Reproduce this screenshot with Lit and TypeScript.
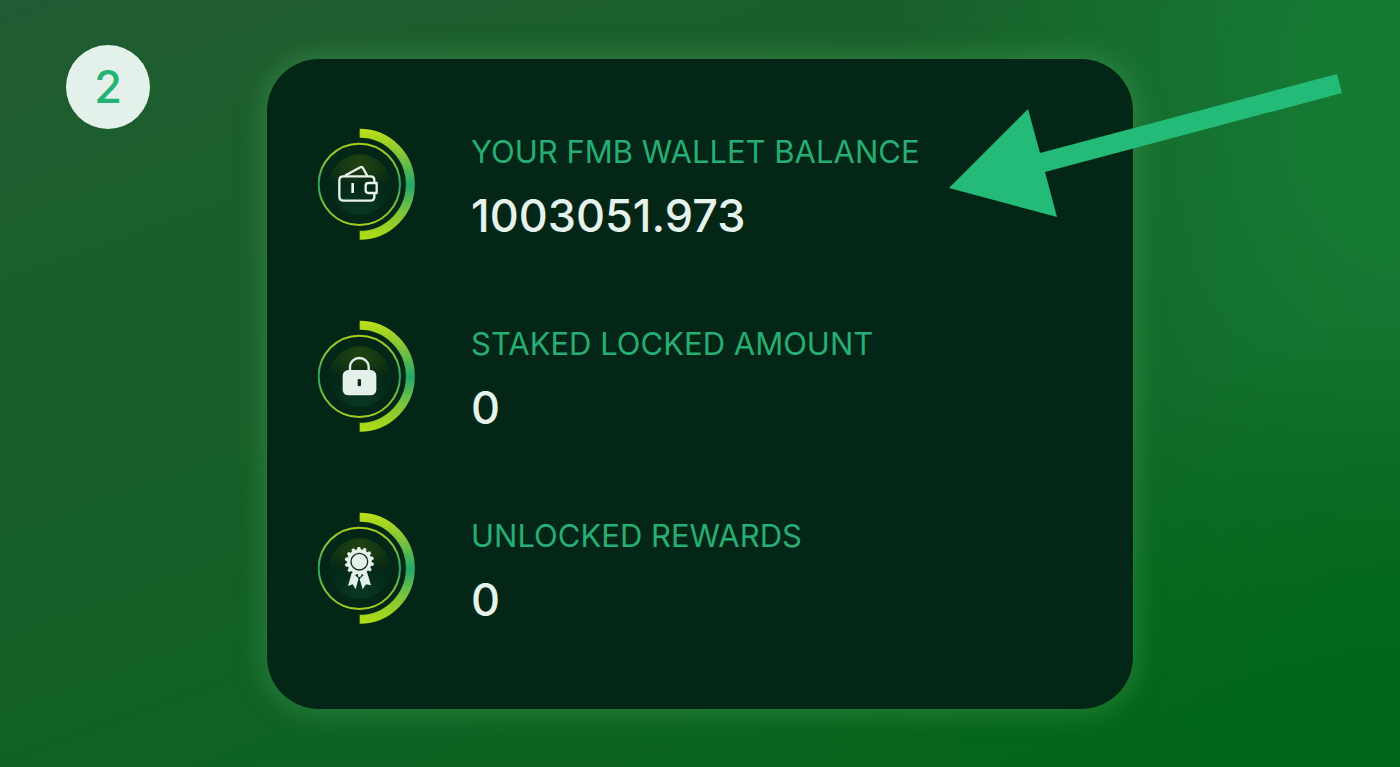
import { LitElement, html, css, svg } from "lit";
import { customElement, property } from "lit/decorators.js";

type Icon = "wallet" | "lock" | "award";

interface Stat {
  icon: Icon;
  label: string;
  value: string;
}

const STATS: Stat[] = [
  { icon: "wallet", label: "YOUR FMB WALLET BALANCE", value: "1003051.973" },
  { icon: "lock", label: "STAKED LOCKED AMOUNT", value: "0" },
  { icon: "award", label: "UNLOCKED REWARDS", value: "0" },
];

// Scalloped rosette: alternating outer and inner points round a circle.
const rosette = (cx: number, cy: number, outer: number, inner: number, teeth: number) => {
  const points: string[] = [];
  for (let i = 0; i < teeth; i++) {
    for (const [offset, r] of [[-0.25, outer], [0.12, outer], [0.3, inner], [0.55, inner]]) {
      const a = ((i + offset) / teeth) * Math.PI * 2;
      points.push(`${(cx + r * Math.sin(a)).toFixed(1)},${(cy - r * Math.cos(a)).toFixed(1)}`);
    }
  }
  return points.join(" ");
};

const GLYPHS = {
  wallet: svg`
    <g fill="none" stroke="#e8f3ec" stroke-width="7" stroke-linejoin="round" stroke-linecap="round">
      <path d="M208 187V180Q208 169 197 169H115Q103 169 103 181V229Q103 242 116 242H194Q208 242 208 230V221" />
      <path d="M122 166L166 142Q171 139 174 144L186 166" />
      <path d="M215 189H190Q182 189 182 197V211Q182 219 190 219H215Z" />
      <path d="M143 189V219" stroke-width="8" stroke-linecap="butt" />
    </g>`,
  lock: svg`
    <path d="M135 180V164a28 26 0 0 1 56 0V180" fill="none" stroke="#e4f1ea" stroke-width="7" />
    <rect x="113" y="174" width="101" height="76" rx="17" fill="#e4f1ea" />
    <rect x="158" y="201" width="10" height="22" rx="4" fill="#062718" />`,
  award: svg`
    <path d="M140 207L129 246L143 241L152 256L162 218L173 256L183 241L198 244L187 207Z" fill="#e4f1ea" />
    <path d="M150 213L163 207L176 213L163 226Z" fill="#06301f" />
    <circle cx="163" cy="215" r="4" fill="#e4f1ea" />
    <polygon points=${rosette(163, 173, 44, 37, 14)} fill="#e4f1ea" />
    <circle cx="163" cy="173" r="25" fill="#e4f1ea" stroke="#0c2d1b" stroke-width="4" />`,
};

@customElement("stat-ring")
export class StatRing extends LitElement {
  @property() icon: Icon = "wallet";

  static styles = css`
    :host {
      display: block;
      flex: none;
    }
    .ring {
      display: block;
      width: 98px;
      height: 112px;
    }
  `;

  render() {
    return html`
      <svg class="ring" viewBox="36 24 294 336" aria-hidden="true">
        <defs>
          <linearGradient id="arc" gradientUnits="userSpaceOnUse" x1="0" y1="27" x2="0" y2="360">
            <stop offset="0" stop-color="#c0df14" />
            <stop offset="0.25" stop-color="#7cc43a" />
            <stop offset="0.5" stop-color="#24a768" />
            <stop offset="0.75" stop-color="#7cc43a" />
            <stop offset="1" stop-color="#b4dd10" />
          </linearGradient>
          <linearGradient id="line" gradientUnits="userSpaceOnUse" x1="0" y1="70" x2="0" y2="317">
            <stop offset="0" stop-color="#a6cf1c" />
            <stop offset="0.25" stop-color="#7cbf38" />
            <stop offset="0.5" stop-color="#26a267" />
            <stop offset="0.75" stop-color="#7cbf38" />
            <stop offset="1" stop-color="#a6cf1c" />
          </linearGradient>
          <linearGradient id="disc" gradientUnits="userSpaceOnUse" x1="0" y1="103" x2="0" y2="285">
            <stop offset="0" stop-color="#2e4f10" />
            <stop offset="0.25" stop-color="#1b3d12" />
            <stop offset="0.5" stop-color="#052817" />
            <stop offset="0.75" stop-color="#06301f" />
            <stop offset="1" stop-color="#0b422c" />
          </linearGradient>
          <radialGradient id="edge" gradientUnits="userSpaceOnUse" cx="164" cy="194" r="91">
            <stop offset="0.6" stop-color="#032616" stop-opacity="0" />
            <stop offset="1" stop-color="#032616" stop-opacity="0.5" />
          </radialGradient>
        </defs>
        <circle cx="164" cy="194" r="91" fill="url(#disc)" />
        <circle cx="164" cy="194" r="91" fill="url(#edge)" />
        <circle cx="163" cy="193" r="122" fill="none" stroke="url(#line)" stroke-width="6" />
        <path d="M164 40A152 153 0 0 1 164 346" fill="none" stroke="url(#arc)" stroke-width="27" />
        ${GLYPHS[this.icon]}
      </svg>
    `;
  }
}

@customElement("app-root")
export class AppRoot extends LitElement {
  static styles = css`
    :host {
      display: block;
      font-family: Inter, "Open Sans", sans-serif;
    }
    .page {
      box-sizing: border-box;
      min-height: 100vh;
      padding: 45px 0 58px;
      display: grid;
      grid-template-columns: 1fr minmax(0, 866px) 1fr;
      align-items: start;
      overflow: hidden;
      background:
        radial-gradient(ellipse 34% 58% at 100% 100%, #006617 10%, rgba(0, 102, 23, 0) 100%),
        radial-gradient(ellipse 36% 95% at 100% 12%, #157a34 15%, rgba(21, 122, 52, 0) 100%),
        linear-gradient(160deg, #225a33 0%, #1b5f2c 18%, #175f29 42%, #0f6225 66%, #07651c 84%, #036619 100%);
    }
    .step {
      width: 84px;
      height: 84px;
      margin-left: 66px;
      border-radius: 50%;
      background: #e4f0ea;
      color: #23b377;
      display: grid;
      place-items: center;
      font-size: 45px;
      line-height: 64px;
      font-weight: 500;
    }
    .card {
      position: relative;
      margin-top: 14px;
      padding: 61px 50px 77px;
      border-radius: 52px;
      background: #032616;
      box-shadow: 0 0 28px 3px rgba(74, 168, 90, 0.44);
    }
    .stats {
      margin: 0;
      display: grid;
      gap: 64px;
    }
    .stat {
      display: flex;
      align-items: center;
      gap: 56px;
    }
    .text {
      min-width: 0;
    }
    .label {
      font-size: 31px;
      line-height: 64px;
      font-weight: 400;
      color: #27ae74;
    }
    .value {
      margin: 0;
      font-size: 45px;
      line-height: 64px;
      font-weight: 500;
      color: #e6f2ec;
    }
    .arrow {
      position: absolute;
      top: 15px;
      right: -209px;
      width: 393px;
      height: 143px;
    }
  `;

  render() {
    return html`
      <main class="page">
        <div class="step">2</div>
        <section class="card">
          <dl class="stats">
            ${STATS.map(
              (s) => html`
                <div class="stat">
                  <stat-ring .icon=${s.icon}></stat-ring>
                  <div class="text">
                    <dt class="label">${s.label}</dt>
                    <dd class="value">${s.value}</dd>
                  </div>
                </div>
              `
            )}
          </dl>
          <svg class="arrow" viewBox="0 0 393 143" aria-hidden="true">
            <polygon points="0,114 79,35 91,79 388,0 393,19 96,98 108,143" fill="#24bb78" />
          </svg>
        </section>
      </main>
    `;
  }
}
